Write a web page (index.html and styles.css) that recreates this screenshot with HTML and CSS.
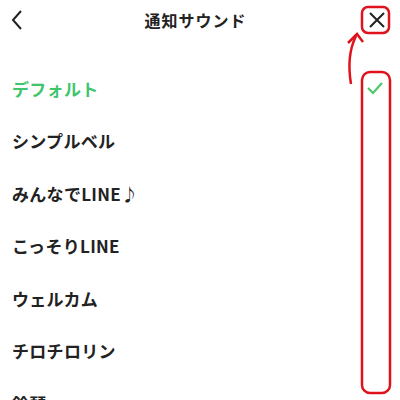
FILE: index.html
```html
<!DOCTYPE html>
<html lang="ja">
<head>
<meta charset="utf-8">
<link rel="stylesheet" href="styles.css">
</head>
<body>
<div class="screen">
  <header class="bar">
    <svg class="back" width="14" height="22" viewBox="0 0 14 22"><path d="M11 2 L3 11 L11 20" fill="none" stroke="#222" stroke-width="2"/></svg>
    <h1 class="title">通知サウンド</h1>
    <svg class="close" width="20" height="20" viewBox="0 0 20 20"><path d="M3 3 L17 17 M17 3 L3 17" fill="none" stroke="#222" stroke-width="2"/></svg>
  </header>
  <ul class="list">
    <li class="row selected"><span>デフォルト</span>
      <svg class="check" width="18" height="14" viewBox="0 0 18 14"><path d="M2 7 L7 12 L16 2" fill="none" stroke="#4cc76b" stroke-width="2.2"/></svg>
    </li>
    <li class="row"><span>シンプルベル</span></li>
    <li class="row"><span>みんなでLINE♪</span></li>
    <li class="row"><span>こっそりLINE</span></li>
    <li class="row"><span>ウェルカム</span></li>
    <li class="row"><span>チロチロリン</span></li>
    <li class="row"><span>鈴琴</span></li>
  </ul>
  <svg class="marks" width="400" height="400" viewBox="0 0 400 400">
    <rect x="362" y="7" width="27" height="26" rx="6" fill="none" stroke="#e0121c" stroke-width="2.5"/>
    <rect x="362" y="72" width="28" height="321" rx="8" fill="none" stroke="#e0121c" stroke-width="2.5"/>
    <path d="M351 84 C348 66 349 50 356 36" fill="none" stroke="#e0121c" stroke-width="2.5"/>
    <path d="M348 43 L357 34 L363 42" fill="none" stroke="#e0121c" stroke-width="2.5"/>
  </svg>
</div>
</body>
</html>
```
FILE: styles.css
```css
* { box-sizing: border-box; }
html, body { margin: 0; padding: 0; background: #fff; }
body { font-family: "Noto Sans CJK JP", "Noto Sans", sans-serif; color: #222; }
.screen { position: relative; width: 400px; height: 400px; overflow: hidden; }
.bar {
  height: 40px;
  display: flex;
  align-items: center;
  justify-content: space-between;
  padding: 0 13px 0 10px;
}
.back { display: block; }
.close { display: block; }
.title {
  margin: 0;
  font-size: 16px;
  font-weight: 700;
  color: #222;
  letter-spacing: 1px;
}
.list { list-style: none; margin: 22px 0 0; padding: 0; }
.row {
  height: 52.5px;
  display: flex;
  align-items: center;
  justify-content: space-between;
  padding: 0 16px 0 12px;
  font-size: 17px;
  font-weight: 700;
  color: #222;
  letter-spacing: 0.3px;
}
.row.selected { color: #3fc56b; }
.marks { position: absolute; left: 0; top: 0; pointer-events: none; }
```
